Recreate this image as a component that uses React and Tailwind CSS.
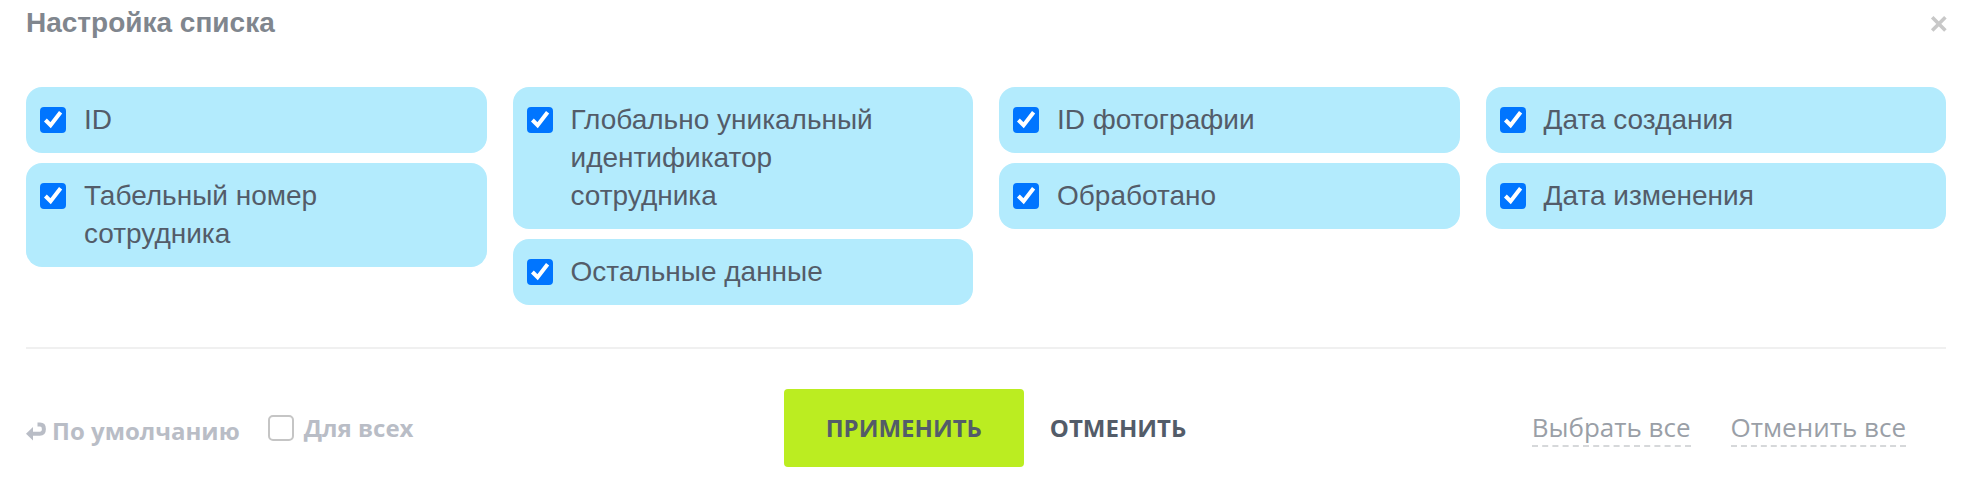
import { useState } from 'react';

const COLUMNS = [
  [
    { id: 'id', label: 'ID' },
    { id: 'number', label: 'Табельный номер сотрудника' },
  ],
  [
    { id: 'guid', label: 'Глобально уникальный идентификатор сотрудника' },
    { id: 'rest', label: 'Остальные данные' },
  ],
  [
    { id: 'photo', label: 'ID фотографии' },
    { id: 'processed', label: 'Обработано' },
  ],
  [
    { id: 'created', label: 'Дата создания' },
    { id: 'changed', label: 'Дата изменения' },
  ],
];

const ALL_IDS = COLUMNS.flat().map((field) => field.id);

function Checkbox({ id, checked, onChange }) {
  return (
    <span className="grid size-[26px] shrink-0">
      <input
        id={id}
        type="checkbox"
        checked={checked}
        onChange={onChange}
        className="peer col-start-1 row-start-1 size-[26px] appearance-none rounded-[5px] border-2 border-[#c5c5c5] bg-white checked:rounded-sm checked:border-[#0075ff] checked:bg-[#0075ff]"
      />
      <svg
        viewBox="0 0 26 26"
        fill="none"
        stroke="#fff"
        strokeWidth="4"
        aria-hidden="true"
        className="pointer-events-none invisible col-start-1 row-start-1 size-[26px] peer-checked:visible"
      >
        <path d="M5.4 13 L10.6 18.2 L20.6 5.2" />
      </svg>
    </span>
  );
}

function FieldCard({ field, checked, onToggle }) {
  return (
    <label
      htmlFor={field.id}
      className={`flex gap-[18px] rounded-2xl pt-3.5 pr-12 pb-3.5 pl-3.5 ${checked ? 'bg-[#b3ebfd]' : 'bg-gray-100'}`}
    >
      <span className="flex h-[38px] items-center">
        <Checkbox id={field.id} checked={checked} onChange={onToggle} />
      </span>
      <span className="text-[28px] leading-[38px] text-[#535c69]">{field.label}</span>
    </label>
  );
}

export default function App() {
  const [selected, setSelected] = useState(ALL_IDS);
  const [forAll, setForAll] = useState(false);

  const toggle = (id) =>
    setSelected((ids) => (ids.includes(id) ? ids.filter((x) => x !== id) : [...ids, id]));

  return (
    <main className="bg-white px-[26px] pb-2.5 font-['Liberation_Sans',Arial,sans-serif]">
      <header className="flex items-center justify-between pt-1">
        <h1 className="text-[28px] leading-[38px] font-bold text-[#80868e]">Настройка списка</h1>
        <button type="button" aria-label="Закрыть" className="grid size-4 place-items-center">
          <svg
            viewBox="0 0 16 16"
            fill="none"
            stroke="#c8c8c8"
            strokeWidth="3.6"
            className="size-4 overflow-visible"
          >
            <path d="M2.2 2.2 L15.4 15.4 M15.4 2.2 L2.2 15.4" />
          </svg>
        </button>
      </header>

      <section className="mt-[45px] grid grid-cols-4 items-start gap-[26px]">
        {COLUMNS.map((fields) => (
          <div key={fields[0].id} className="flex flex-col gap-2.5">
            {fields.map((field) => (
              <FieldCard
                key={field.id}
                field={field}
                checked={selected.includes(field.id)}
                onToggle={() => toggle(field.id)}
              />
            ))}
          </div>
        ))}
      </section>

      <footer className="mt-[42px] grid grid-cols-[1fr_auto_1fr] items-center border-t-2 border-[#f0f0f0] pt-10 font-['Open_Sans',sans-serif]">
        <div className="flex items-center gap-7 text-2xl font-bold text-[#b9bdc6]">
          <button type="button" className="flex items-center gap-1.5 pt-1.5">
            <svg viewBox="0 0 20 20" fill="none" aria-hidden="true" className="size-5">
              <path
                d="M11.5 3.6 H14 C16.8 3.6 17.9 5.4 17.9 8 C17.9 11 16.6 12.8 13.8 12.8 H6"
                stroke="currentColor"
                strokeWidth="4"
              />
              <path d="M0 12.8 L7 6 V19.6 Z" fill="currentColor" />
            </svg>
            По умолчанию
          </button>
          <label htmlFor="for-all" className="flex items-center gap-2.5">
            <Checkbox id="for-all" checked={forAll} onChange={() => setForAll(!forAll)} />
            Для всех
          </label>
        </div>

        <div className="flex text-2xl font-bold text-[#535c69]">
          <button type="button" className="h-[78px] rounded-sm bg-[#bbed21] px-[42px]">
            ПРИМЕНИТЬ
          </button>
          <button type="button" className="h-[78px] pr-0.5 pl-[26px]">
            ОТМЕНИТЬ
          </button>
        </div>

        <div className="flex justify-end gap-10 pr-10 text-[26px] leading-9 text-[#9a9fa7]">
          <button type="button" onClick={() => setSelected(ALL_IDS)} className="border-b-2 border-dashed border-[#d6d8da]">
            Выбрать все
          </button>
          <button type="button" onClick={() => setSelected([])} className="border-b-2 border-dashed border-[#d6d8da]">
            Отменить все
          </button>
        </div>
      </footer>
    </main>
  );
}
